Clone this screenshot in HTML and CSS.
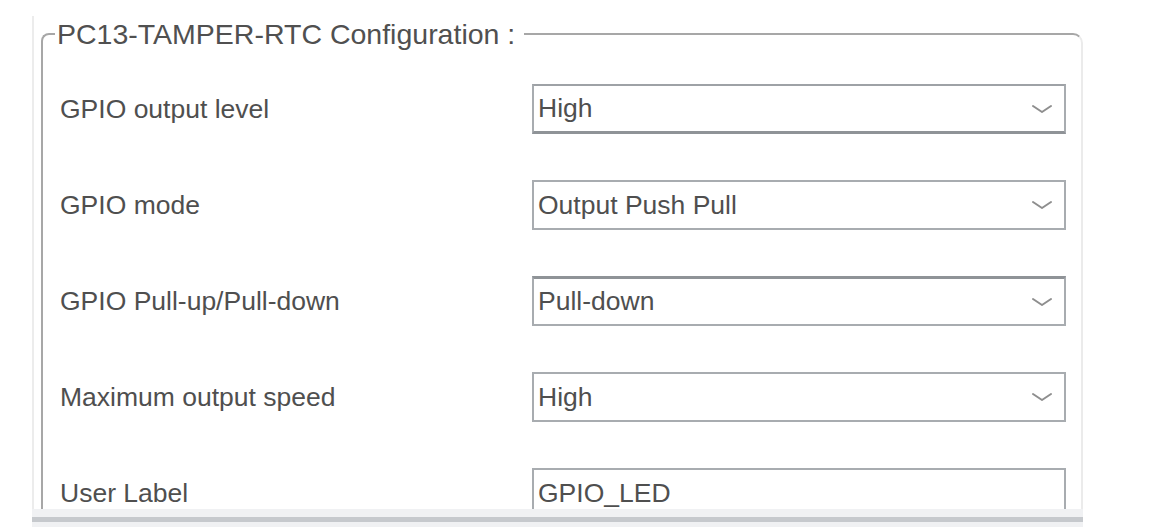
FILE: index.html
```html
<!DOCTYPE html>
<html>
<head>
<meta charset="utf-8">
<title>PC13-TAMPER-RTC Configuration</title>
<link rel="stylesheet" href="styles.css">
</head>
<body>
<div class="frame">
  <div class="scroll">
    <fieldset class="group">
      <legend class="group-title">PC13-TAMPER-RTC Configuration :</legend>
      <div class="rows">
        <div class="row">
          <span class="label">GPIO output level</span>
          <div class="select select-first">
            <span class="value">High</span>
            <svg class="chev" width="22" height="12" viewBox="0 0 22 12"><polyline points="2,3 11,9 20,3" fill="none" stroke="#8e8e8e" stroke-width="2" stroke-linecap="round" stroke-linejoin="round"/></svg>
          </div>
        </div>
        <div class="row">
          <span class="label">GPIO mode</span>
          <div class="select">
            <span class="value">Output Push Pull</span>
            <svg class="chev" width="22" height="12" viewBox="0 0 22 12"><polyline points="2,3 11,9 20,3" fill="none" stroke="#8e8e8e" stroke-width="2" stroke-linecap="round" stroke-linejoin="round"/></svg>
          </div>
        </div>
        <div class="row">
          <span class="label">GPIO Pull-up/Pull-down</span>
          <div class="select select-pressed">
            <span class="value">Pull-down</span>
            <svg class="chev" width="22" height="12" viewBox="0 0 22 12"><polyline points="2,3 11,9 20,3" fill="none" stroke="#8e8e8e" stroke-width="2" stroke-linecap="round" stroke-linejoin="round"/></svg>
          </div>
        </div>
        <div class="row">
          <span class="label">Maximum output speed</span>
          <div class="select">
            <span class="value">High</span>
            <svg class="chev" width="22" height="12" viewBox="0 0 22 12"><polyline points="2,3 11,9 20,3" fill="none" stroke="#8e8e8e" stroke-width="2" stroke-linecap="round" stroke-linejoin="round"/></svg>
          </div>
        </div>
        <div class="row">
          <span class="label">User Label</span>
          <div class="select text-input">
            <span class="value">GPIO_LED</span>
          </div>
        </div>
      </div>
    </fieldset>
  </div>
  <div class="hbar"><div class="hbar-thumb"></div></div>
</div>
</body>
</html>
```
FILE: styles.css
```css
html, body {
  margin: 0;
  background: #ffffff;
}

body {
  font-family: "Liberation Sans", Arial, sans-serif;
  color: #4f4f4f;
}

.frame {
  margin: 16px 0 0 32px;
  width: 1051px;
}

.scroll {
  box-sizing: border-box;
  height: 493px;
  overflow: hidden;
  border-left: 2px solid #ececec;
  padding: 3px 0 0 7px;
}

.group {
  margin: 0;
  min-width: 0;
  padding: 35px 15px 0 0;
  border: 2px solid #a7a7a7;
  border-right-color: #ebebeb;
  border-bottom: none;
  border-radius: 8px 10px 0 0;
}

.group-title {
  margin-left: 12px;
  padding: 0 9px 0 2px;
  font-size: 28.5px;
  line-height: 30px;
  color: #505050;
}

.rows {
  display: flex;
  flex-direction: column;
  gap: 46px;
}

.row {
  display: flex;
  align-items: center;
  height: 50px;
  padding-left: 17px;
}

.label {
  width: 472px;
  flex: none;
  font-size: 26.5px;
}

.select {
  box-sizing: border-box;
  width: 534px;
  height: 50px;
  flex: none;
  display: flex;
  align-items: center;
  justify-content: space-between;
  padding: 0 11px 0 4px;
  border: 2px solid #a8acb0;
  background: #ffffff;
}

.select-first {
  border-top-color: #9ea2a6;
  border-bottom: 3px solid #8f9397;
}

.select-pressed {
  border-top: 3px solid #8f9397;
}

.text-input {
  height: 50px;
}

.value {
  font-size: 26.5px;
  color: #4f4f4f;
}

.chev {
  display: block;
  flex: none;
}

.hbar {
  height: 18px;
  background: #f0f1f3;
  padding-top: 8px;
  box-sizing: border-box;
}

.hbar-thumb {
  height: 5px;
  background: #c6c9cd;
}
```
